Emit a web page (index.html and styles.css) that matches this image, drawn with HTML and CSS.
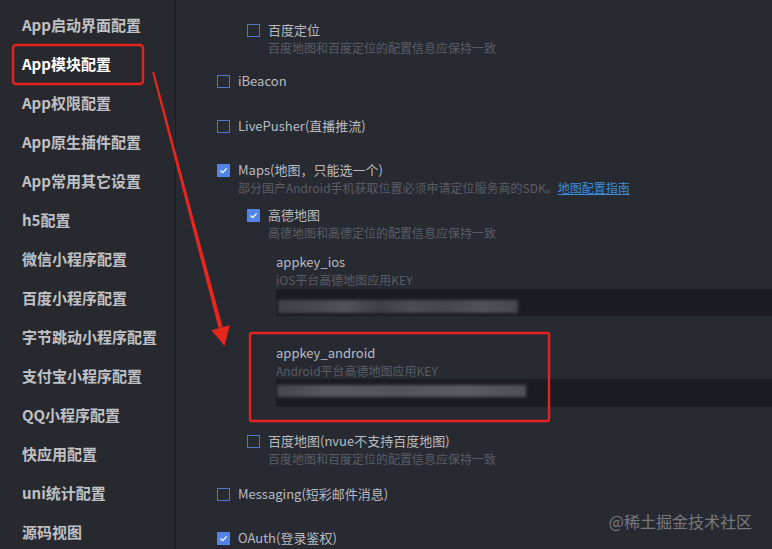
FILE: index.html
```html
<!DOCTYPE html>
<html lang="zh-CN">
  <head>
    <meta charset="UTF-8" />
    <meta name="viewport" content="width=device-width, initial-scale=1.0" />
    <title>manifest.json</title>
    <link rel="stylesheet" href="styles.css">
  </head>

  <body>
    <div class="app">
      <aside class="sidebar">
        <div class="nav-item">App启动界面配置</div>
        <div class="nav-item active">App模块配置</div>
        <div class="nav-item">App权限配置</div>
        <div class="nav-item">App原生插件配置</div>
        <div class="nav-item">App常用其它设置</div>
        <div class="nav-item">h5配置</div>
        <div class="nav-item">微信小程序配置</div>
        <div class="nav-item">百度小程序配置</div>
        <div class="nav-item">字节跳动小程序配置</div>
        <div class="nav-item">支付宝小程序配置</div>
        <div class="nav-item">QQ小程序配置</div>
        <div class="nav-item">快应用配置</div>
        <div class="nav-item">uni统计配置</div>
        <div class="nav-item">源码视图</div>
      </aside>

      <main class="content">
        <div class="opt sub">
          <div class="row"><span class="box"></span><span>百度定位</span></div>
          <div class="desc">百度地图和百度定位的配置信息应保持一致</div>
        </div>

        <div class="opt gap-16">
          <div class="row"><span class="box"></span><span>iBeacon</span></div>
        </div>

        <div class="opt gap-27">
          <div class="row"><span class="box"></span><span>LivePusher(直播推流)</span></div>
        </div>

        <div class="opt gap-26">
          <div class="row">
            <span class="box on">
              <svg width="9" height="9" viewBox="0 0 9 9"><polyline points="1.5,4.5 3.7,6.6 7.6,2.4" fill="none" stroke="#fff" stroke-width="1.3"/></svg>
            </span>
            <span>Maps(地图，只能选一个)</span>
          </div>
          <div class="desc">部分国产Android手机获取位置必须申请定位服务商的SDK。<a class="link" href="#">地图配置指南</a></div>
        </div>

        <div class="opt sub gap-10">
          <div class="row">
            <span class="box on">
              <svg width="9" height="9" viewBox="0 0 9 9"><polyline points="1.5,4.5 3.7,6.6 7.6,2.4" fill="none" stroke="#fff" stroke-width="1.3"/></svg>
            </span>
            <span>高德地图</span>
          </div>
          <div class="desc">高德地图和高德定位的配置信息应保持一致</div>
        </div>

        <div class="field gap-12">
          <div class="field-label">appkey_ios</div>
          <div class="desc">iOS平台高德地图应用KEY</div>
          <div class="field-input">
            <div class="masked masked-ios"></div>
          </div>
        </div>

        <div class="field gap-28">
          <div class="field-label">appkey_android</div>
          <div class="desc">Android平台高德地图应用KEY</div>
          <div class="field-input tall">
            <div class="masked masked-android"></div>
          </div>
        </div>

        <div class="opt sub gap-25">
          <div class="row"><span class="box"></span><span>百度地图(nvue不支持百度地图)</span></div>
          <div class="desc">百度地图和百度定位的配置信息应保持一致</div>
        </div>

        <div class="opt gap-18">
          <div class="row"><span class="box"></span><span>Messaging(短彩邮件消息)</span></div>
        </div>

        <div class="opt gap-26">
          <div class="row">
            <span class="box on">
              <svg width="9" height="9" viewBox="0 0 9 9"><polyline points="1.5,4.5 3.7,6.6 7.6,2.4" fill="none" stroke="#fff" stroke-width="1.3"/></svg>
            </span>
            <span>OAuth(登录鉴权)</span>
          </div>
        </div>
      </main>

      <!-- annotations drawn over the screenshot -->
      <svg class="marks" width="772" height="549" viewBox="0 0 772 549">
        <rect x="13" y="45" width="130" height="39" rx="3" fill="none" stroke="#e5231e" stroke-width="2.4"/>
        <rect x="250" y="333" width="299" height="88" rx="2" fill="none" stroke="#e5231e" stroke-width="2.4"/>
        <polygon points="152.2,72.3 154.2,71.8 222.6,327 218.6,328.1" fill="#e8261f"/>
        <polygon points="211.4,330.2 229.6,325.3 224.6,346" fill="#e8261f"/>
      </svg>

      <div class="watermark">@稀土掘金技术社区</div>
    </div>
  </body>
</html>
```

FILE: styles.css
```css
html,
body {
    margin: 0;
    padding: 0;
    height: 100%;
}

body {
    background-color: #282a31;
    font-family: "Noto Sans CJK SC", "Noto Sans", sans-serif;
    overflow: hidden;
}

.app {
    position: relative;
    display: flex;
    height: 549px;
    overflow: hidden;
}

.sidebar {
    width: 176px;
    flex: none;
    box-sizing: border-box;
    padding-top: 5px;
    background-color: #27292f;
    border-right: 1px solid #1d1e23;
}

.nav-item {
    height: 39px;
    line-height: 39px;
    padding-left: 22px;
    font-size: 15px;
    font-weight: bold;
    color: #c0c1c5;
    white-space: nowrap;
}

.nav-item.active {
    color: #ffffff;
}

.content {
    flex: 1;
    min-width: 0;
    padding: 21px 0 0 41px;
    color: #b9bbc1;
    font-size: 13px;
}

.row {
    display: flex;
    align-items: center;
    gap: 8px;
    height: 18px;
    line-height: 18px;
    white-space: nowrap;
}

.box {
    width: 13px;
    height: 13px;
    flex: none;
    box-sizing: border-box;
    border: 1px solid #5076c6;
}

.box.on {
    display: flex;
    align-items: center;
    justify-content: center;
    background-color: #5183e8;
    border-color: #5183e8;
}

.desc {
    padding-left: 21px;
    font-size: 12px;
    line-height: 17px;
    color: #5a5d65;
    white-space: nowrap;
}

.link {
    color: #3b8fdb;
    text-decoration: underline;
}

.sub {
    margin-left: 30px;
}

.field {
    margin-left: 59px;
}

.field .desc {
    padding-left: 0;
}

.field-label {
    height: 18px;
    line-height: 18px;
    color: #b9bbc1;
}

.field-input {
    height: 27px;
    margin-top: 1px;
    background-color: #1c1d22;
    overflow: hidden;
}

.field-input.tall {
    height: 28px;
    margin-top: 0;
}

.masked {
    filter: blur(1.5px);
}

.masked-ios {
    width: 240px;
    height: 13px;
    margin: 11px 0 0 2px;
    background: linear-gradient(90deg, #3f4147 0%, #484a50 18%, #515358 28%, #3d3f45 42%, #4a4c52 55%, #45474d 70%, #505257 85%, #46484e 100%);
}

.masked-android {
    width: 249px;
    height: 12px;
    margin: 6px 0 0 1px;
    background: linear-gradient(90deg, #45474c 0%, #56585d 20%, #525459 50%, #5a5c61 75%, #4d4f54 100%);
}

.gap-10 { margin-top: 10px; }
.gap-12 { margin-top: 12px; }
.gap-16 { margin-top: 16px; }
.gap-18 { margin-top: 18px; }
.gap-25 { margin-top: 25px; }
.gap-26 { margin-top: 26px; }
.gap-27 { margin-top: 27px; }
.gap-28 { margin-top: 28px; }

.marks {
    position: absolute;
    left: 0;
    top: 0;
    pointer-events: none;
}

.watermark {
    position: absolute;
    right: 20px;
    top: 510px;
    font-size: 16px;
    line-height: 22px;
    color: rgba(200, 201, 206, 0.5);
    white-space: nowrap;
}
```
